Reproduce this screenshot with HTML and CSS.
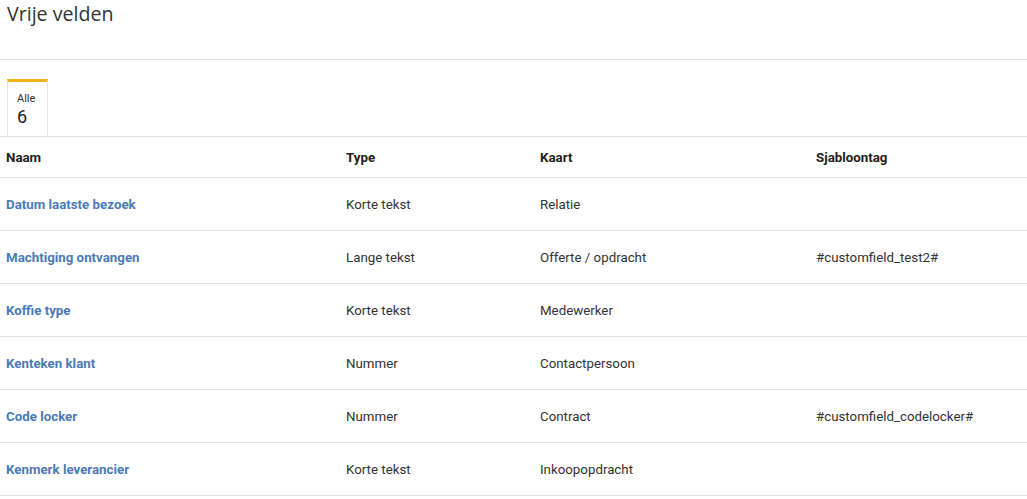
FILE: index.html
```html
<!DOCTYPE html>
<html lang="nl">

<head>
    <meta charset="UTF-8">
    <meta name="viewport" content="width=device-width, initial-scale=1.0">
    <title>Vrije velden</title>
    <link rel="stylesheet" href="styles.css">
</head>

<body>
    <header class="page-header">
        <h1>Vrije velden</h1>
    </header>
    <div class="tabs">
        <div class="tab tab-active">
            <span class="tab-label">Alle</span>
            <span class="tab-count">6</span>
        </div>
    </div>
    <table class="fields">
        <thead>
            <tr>
                <th class="col-name">Naam</th>
                <th class="col-type">Type</th>
                <th class="col-card">Kaart</th>
                <th>Sjabloontag</th>
            </tr>
        </thead>
        <tbody>
            <tr>
                <td><a href="#">Datum laatste bezoek</a></td>
                <td>Korte tekst</td>
                <td>Relatie</td>
                <td></td>
            </tr>
            <tr>
                <td><a href="#">Machtiging ontvangen</a></td>
                <td>Lange tekst</td>
                <td>Offerte / opdracht</td>
                <td>#customfield_test2#</td>
            </tr>
            <tr>
                <td><a href="#">Koffie type</a></td>
                <td>Korte tekst</td>
                <td>Medewerker</td>
                <td></td>
            </tr>
            <tr>
                <td><a href="#">Kenteken klant</a></td>
                <td>Nummer</td>
                <td>Contactpersoon</td>
                <td></td>
            </tr>
            <tr>
                <td><a href="#">Code locker</a></td>
                <td>Nummer</td>
                <td>Contract</td>
                <td>#customfield_codelocker#</td>
            </tr>
            <tr>
                <td><a href="#">Kenmerk leverancier</a></td>
                <td>Korte tekst</td>
                <td>Inkoopopdracht</td>
                <td></td>
            </tr>
        </tbody>
    </table>
</body>

</html>
```

FILE: styles.css
```css
body {
    margin: 0;
    font-family: Roboto, "Liberation Sans", sans-serif;
    font-size: 13.3px;
    color: #333;
    background: #fff;
}

.page-header {
    height: 59px;
    border-bottom: 1px solid #e0e0e0;
}

h1 {
    margin: 0;
    padding: 1px 0 0 7px;
    font-family: "Open Sans", sans-serif;
    font-weight: 400;
    font-size: 19.6px;
    line-height: 26px;
    color: #333;
}

.tabs {
    display: flex;
    padding: 19px 0 0 7px;
}

.tab {
    display: flex;
    flex-direction: column;
    width: 41px;
    height: 57px;
    box-sizing: border-box;
    padding: 10px 0 0 9px;
    border: 1px solid #e4e4e4;
    border-top: 3px solid #f1b31c;
    border-bottom: none;
}

.tab-label {
    font-size: 11px;
    line-height: 14px;
    color: #333;
}

.tab-count {
    font-size: 18px;
    line-height: 22px;
    color: #222;
}

.fields {
    width: 100%;
    border-collapse: collapse;
    border-top: 1px solid #e0e0e0;
}

.fields th,
.fields td {
    text-align: left;
    padding: 0 6px;
    border-bottom: 1px solid #e4e4e4;
}

.fields th {
    height: 40px;
    font-weight: 700;
    color: #222;
}

.fields td {
    height: 52px;
}

.col-name {
    width: 328px;
}

.col-type {
    width: 182px;
}

.col-card {
    width: 264px;
}

.fields a {
    color: #4b7ab8;
    font-weight: 700;
    text-decoration: none;
}
```
